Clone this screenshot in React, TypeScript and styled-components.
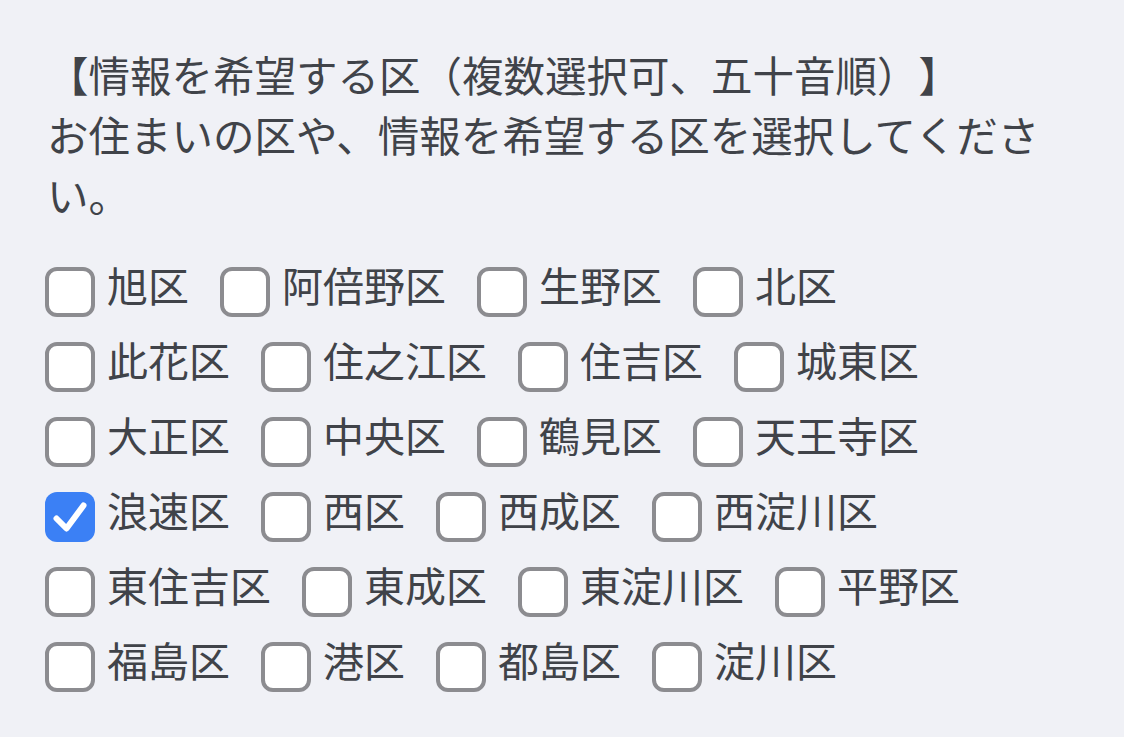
import React, { useState } from "react";
import styled, { createGlobalStyle } from "styled-components";

const Global = createGlobalStyle`
  html, body {
    margin: 0;
    padding: 0;
    background: #f0f1f6;
  }
  body {
    font-family: "Noto Sans CJK JP", "Noto Sans", sans-serif;
    color: #404349;
    text-spacing-trim: space-all;
  }
`;

const Page = styled.div`
  padding: 44px 0 40px 47px;
  width: 1000px;
`;

const Intro = styled.p`
  margin: 0;
  font-size: 41.5px;
  line-height: 60px;
  font-weight: 400;
  letter-spacing: 0;
  text-spacing-trim: space-all;
`;

const Grid = styled.div`
  margin-top: 35px;
  display: flex;
  flex-wrap: wrap;
  column-gap: 31px;
  row-gap: 17px;
  margin-left: -2px;
`;

const Item = styled.label`
  display: flex;
  align-items: flex-start;
  gap: 12px;
  cursor: pointer;
`;

const Box = styled.span<{ $checked: boolean }>`
  box-sizing: border-box;
  width: 50px;
  height: 50px;
  margin-top: 8px;
  border-radius: 12px;
  flex: none;
  display: flex;
  align-items: center;
  justify-content: center;
  background: ${(p) => (p.$checked ? "#3b80f5" : "#ffffff")};
  border: ${(p) => (p.$checked ? "none" : "4px solid #8c8c90")};
`;

const Hidden = styled.input`
  position: absolute;
  opacity: 0;
  width: 0;
  height: 0;
  margin: 0;
`;

const Text = styled.span`
  font-size: 41px;
  line-height: 50px;
  white-space: nowrap;
`;

const wards = [
  "旭区", "阿倍野区", "生野区", "北区",
  "此花区", "住之江区", "住吉区", "城東区",
  "大正区", "中央区", "鶴見区", "天王寺区",
  "浪速区", "西区", "西成区", "西淀川区",
  "東住吉区", "東成区", "東淀川区", "平野区",
  "福島区", "港区", "都島区", "淀川区",
];

export default function App() {
  const [checked, setChecked] = useState<Record<string, boolean>>({ 浪速区: true });
  return (
    <>
      <Global />
      <Page>
        <Intro>
          【情報を希望する区（複数選択可、五十音順）】
          <br />
          お住まいの区や、情報を希望する区を選択してください。
        </Intro>
        <Grid>
          {wards.map((w) => (
            <Item key={w}>
              <Hidden
                type="checkbox"
                checked={!!checked[w]}
                onChange={() => setChecked((c) => ({ ...c, [w]: !c[w] }))}
              />
              <Box $checked={!!checked[w]}>
                {checked[w] && (
                  <svg width="50" height="50" viewBox="0 0 50 50">
                    <path
                      d="M11.5 26.5 L21.5 36.5 L38.5 13.5"
                      fill="none"
                      stroke="#ffffff"
                      strokeWidth="6"
                      strokeLinecap="round"
                      strokeLinejoin="round"
                    />
                  </svg>
                )}
              </Box>
              <Text>{w}</Text>
            </Item>
          ))}
        </Grid>
      </Page>
    </>
  );
}
